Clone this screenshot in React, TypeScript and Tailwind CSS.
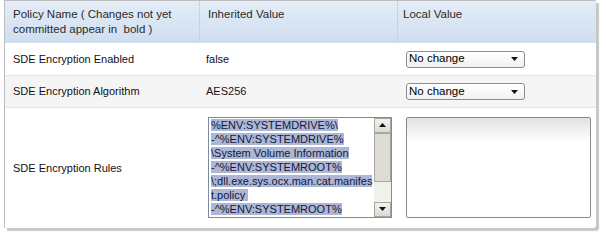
import React from 'react';

const font = { fontFamily: '"Liberation Sans", Arial, sans-serif' };

const rules = [
  '%ENV:SYSTEMDRIVE%\\',
  '-^%ENV:SYSTEMDRIVE%',
  '\\System Volume Information',
  '-^%ENV:SYSTEMROOT%',
  '\\;dll.exe.sys.ocx.man.cat.manifes',
  't.policy ',
  '-^%ENV:SYSTEMROOT%',
];

const FakeSelect: React.FC = () => (
  <div className="flex h-[17px] w-[119px] items-center justify-between rounded-[3px] border border-[#8c8c8c] bg-gradient-to-b from-white to-[#f1f1f1] pl-[2px] pr-[6px] text-[11.5px] text-black">
    <span>No change</span>
    <svg width="7" height="4" viewBox="0 0 7 4">
      <path d="M0 0h7L3.5 4z" fill="#111" />
    </svg>
  </div>
);

const ScrollArrow: React.FC<{ up?: boolean }> = ({ up }) => (
  <div className="flex h-[15px] w-full items-center justify-center border border-[#a7a6a1] bg-gradient-to-b from-[#f4f3ee] to-[#dcdad3]">
    <svg width="7" height="4" viewBox="0 0 7 4">
      <path d={up ? 'M0 4h7L3.5 0z' : 'M0 0h7L3.5 4z'} fill="#111" />
    </svg>
  </div>
);

export default function App() {
  return (
    <div className="h-[241px] w-[606px] bg-white" style={font}>
      <div className="ml-[4px] w-[592px] rounded-br-[3px] border-l border-t border-[#bdbdbd] bg-white shadow-[3px_3px_1px_rgba(0,0,0,0.22)]">
        {/* header */}
        <div className="grid h-[42px] grid-cols-[195px_198px_199px] border-b border-[#d4dde8] bg-gradient-to-b from-[#e4edf8] to-[#cfdeef] text-[11.5px] leading-[15px] text-[#2a2a2a]">
          <div className="border-r border-[#c5d2e0] pl-[8px] pt-[6px]">
            Policy Name ( Changes not yet
            <br />
            committed appear in&nbsp; bold )
          </div>
          <div className="border-r border-[#c5d2e0] pl-[8px] pt-[6px]">Inherited Value</div>
          <div className="pl-[5px] pt-[6px]">Local Value</div>
        </div>

        {/* rows */}
        <div className="grid h-[33px] grid-cols-[195px_198px_199px] items-center border-b border-[#e6e6e6] text-[11px] text-[#111]">
          <div className="pl-[8px]">SDE Encryption Enabled</div>
          <div className="pl-[6px]">false</div>
          <div className="pl-[8px]">
            <FakeSelect />
          </div>
        </div>
        <div className="grid h-[32px] grid-cols-[195px_198px_199px] items-center border-b border-[#e6e6e6] bg-[#f6f5f5] text-[11px] text-[#111]">
          <div className="pl-[8px]">SDE Encryption Algorithm</div>
          <div className="pl-[6px]">AES256</div>
          <div className="pl-[8px]">
            <FakeSelect />
          </div>
        </div>
        <div className="grid h-[120px] grid-cols-[195px_198px_199px] items-center text-[11px] text-[#111]">
          <div className="pl-[8px]">SDE Encryption Rules</div>
          <div className="pl-[8px]">
            <div className="mt-[-2px] flex h-[101px] w-[184px] border border-[#7b8aa6] bg-white">
              <div className="flex-1 overflow-hidden pl-[2px] text-[11px] leading-[14px] text-[#0d1a3a]">
                {rules.map((line, i) => (
                  <div key={i} className="whitespace-pre">
                    <span className="bg-[#aeb6d6]">{line}</span>
                  </div>
                ))}
              </div>
              <div className="flex w-[17px] flex-col bg-[#f1f0ec]">
                <ScrollArrow up />
                <div className="h-[49px] border border-[#a7a6a1] bg-[#dedbd4]" />
                <div className="flex-1" />
                <ScrollArrow />
              </div>
            </div>
          </div>
          <div className="pl-[8px]">
            <div className="mt-[-2px] h-[101px] w-[185px] rounded-[2px] border border-[#8a8a8a] bg-[linear-gradient(to_bottom,#e2e2e2,#ffffff_24%)]" />
          </div>
        </div>
      </div>
    </div>
  );
}
